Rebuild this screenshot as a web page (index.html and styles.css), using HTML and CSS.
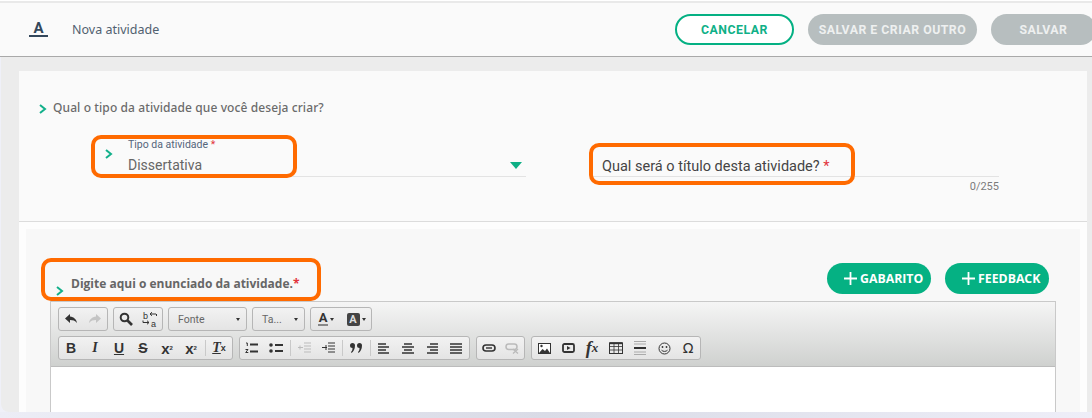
FILE: index.html
```html
<html>
  <head>
    <meta charset="utf-8">
    <link rel="stylesheet" href="styles.css">
  </head>
  <body>
    <div id="topBar">
      <div class="pageTitle">
        <span class="titleIcon">A</span>
        <span class="titleText">Nova atividade</span>
      </div>
      <div class="actions">
        <button class="btn btnOutline">CANCELAR</button>
        <button class="btn btnOff btnLong">SALVAR E CRIAR OUTRO</button>
        <button class="btn btnOff btnShort">SALVAR</button>
      </div>
    </div>

    <div id="content">
      <div class="card">
        <div class="question">
          <svg class="chevron" width="8" height="10" viewBox="0 0 8 10"><path d="M1 1 6 5 1 9" fill="none" stroke="#12b08a" stroke-width="2"/></svg>
          <span>Qual o tipo da atividade que você deseja criar?</span>
        </div>
        <div class="fields">
          <div class="selectField">
            <svg class="selectChevron" width="8" height="10" viewBox="0 0 8 10"><path d="M1 1 6 5 1 9" fill="none" stroke="#12b08a" stroke-width="2"/></svg>
            <div class="selectBody">
              <div class="selectLabel">Tipo da atividade <em>*</em></div>
              <div class="selectRow">
                <span>Dissertativa</span>
                <i class="selectArrow"></i>
              </div>
            </div>
          </div>
          <div class="titleField">
            <div class="titleInput">Qual será o título desta atividade? <em>*</em></div>
            <div class="counter">0/255</div>
          </div>
        </div>
      </div>

      <div class="sheet">
        <div class="lowerCard">
          <div class="statementHead">
            <div class="statementLabel">
              <svg class="statementChevron" width="8" height="10" viewBox="0 0 8 10"><path d="M1 1 6 5 1 9" fill="none" stroke="#12b08a" stroke-width="2"/></svg>
              <span>Digite aqui o enunciado da atividade.<em>*</em></span>
            </div>
            <div class="statementButtons">
              <button class="addBtn"><svg width="13" height="13" viewBox="0 0 13 13"><path d="M6.500 0v13M0 6.500h13" stroke="#fff" stroke-width="1.800"/></svg>GABARITO</button>
              <button class="addBtn"><svg width="13" height="13" viewBox="0 0 13 13"><path d="M6.500 0v13M0 6.500h13" stroke="#fff" stroke-width="1.800"/></svg>FEEDBACK</button>
            </div>
          </div>

          <div class="editor">
            <div class="toolbar">
              <div class="toolRow">
                <div class="group">
                  <span class="tool"><svg width="14" height="12" viewBox="0 0 14 12"><path d="M6 1 1 5.500 6 10V7c3 0 5 .6 7 3-.5-3.500-3-6-7-6.500z" fill="#333"/></svg></span>
                  <span class="tool"><svg width="14" height="12" viewBox="0 0 14 12"><path d="M8 1l5 4.500L8 10V7C5 7 3 7.600 1 10c.5-3.500 3-6 7-6.500z" fill="#c4c4c4"/></svg></span>
                </div>
                <div class="group">
                  <span class="tool"><svg width="14" height="14" viewBox="0 0 14 14"><circle cx="5.500" cy="5.500" r="3.800" fill="none" stroke="#333" stroke-width="2"/><path d="M8.500 8.500 13 13" stroke="#333" stroke-width="2.600"/></svg></span>
                  <span class="tool">
                    <svg width="17" height="17" viewBox="0 0 17 17"><text x="1" y="7.500" class="replaceText">b</text><text x="9" y="15.500" class="replaceText">a</text><path d="M8 3h6M8 3l2-1.800M8 3l2 1.800M14.500 3v2M1 11.500h6M7 11.500l-2-1.800M7 11.500l-2 1.800M1 9.500v2" fill="none" stroke="#333"/></svg>
                  </span>
                </div>
                <div class="group combo comboFont"><span>Fonte</span><i></i></div>
                <div class="group combo comboSize"><span>Ta...</span><i></i></div>
                <div class="group">
                  <span class="tool toolWide"><u class="colorA">A</u><i></i></span>
                  <span class="tool toolWide"><span class="bgA">A</span><i></i></span>
                </div>
              </div>
              <div class="toolRow toolRowWide">
                <div class="group groupSep">
                  <span class="tool fmt">B</span>
                  <span class="tool fmt fmtI">I</span>
                  <span class="tool fmt fmtU">U</span>
                  <span class="tool fmt fmtS">S</span>
                  <span class="tool fmt fmtX">x<sub>2</sub></span>
                  <span class="tool fmt fmtX">x<sup>2</sup></span>
                  <s class="sep"></s>
                  <span class="tool fmt fmtClear"><span>T</span><sub>x</sub></span>
                </div>
                <div class="group groupSep">
                  <span class="tool"><svg width="14" height="12" viewBox="0 0 14 12"><path d="M5 2.500h8M5 9.500h8" stroke="#333" stroke-width="2"/><path d="M1 1h1.300v3M.5 7.500H3L.7 10.500H3.300" fill="none" stroke="#333"/></svg></span>
                  <span class="tool"><svg width="14" height="10" viewBox="0 0 14 10"><circle cx="2" cy="2" r="1.800" fill="#333"/><circle cx="2" cy="8" r="1.800" fill="#333"/><path d="M6 2h8M6 8h8" stroke="#333" stroke-width="2"/></svg></span>
                  <s class="sep"></s>
                  <span class="tool"><svg width="14" height="12" viewBox="0 0 14 12"><path d="M7 1h7M7 4h7M7 7h7M7 10h7" stroke="#bbb"/><path d="M1 5.500h5M3 3.500v4" stroke="#bbb"/></svg></span>
                  <span class="tool"><svg width="14" height="12" viewBox="0 0 14 12"><path d="M7 1h7M7 4h7M7 7h7M7 10h7M1 5.500h5M5 3v5" stroke="#333"/></svg></span>
                  <s class="sep"></s>
                  <span class="tool"><svg width="13" height="10" viewBox="0 0 13 10"><path d="M0 2.500a2.500 2.500 0 1 1 5 0C5 6 3.500 8.500 1.500 10L1 9c1-1 1.500-2 1.500-4A2.500 2.500 0 0 1 0 2.500zM7 2.500a2.500 2.500 0 1 1 5 0c0 3.500-1.500 6-3.500 7.500L8 9c1-1 1.500-2 1.500-4A2.500 2.500 0 0 1 7 2.500z" fill="#333"/></svg></span>
                  <s class="sep"></s>
                  <span class="tool"><svg width="12" height="11" viewBox="0 0 12 11"><path d="M0 1h8M0 4h11M0 7h8M0 10h11" stroke="#333" stroke-width="1.500"/></svg></span>
                  <span class="tool"><svg width="12" height="11" viewBox="0 0 12 11"><path d="M2 1h8M0 4h12M2 7h8M0 10h12" stroke="#333" stroke-width="1.500"/></svg></span>
                  <span class="tool"><svg width="12" height="11" viewBox="0 0 12 11"><path d="M4 1h8M1 4h11M4 7h8M1 10h11" stroke="#333" stroke-width="1.500"/></svg></span>
                  <span class="tool"><svg width="12" height="11" viewBox="0 0 12 11"><path d="M0 1h12M0 4h12M0 7h12M0 10h12" stroke="#333" stroke-width="1.500"/></svg></span>
                </div>
                <div class="group groupLink">
                  <span class="tool"><svg width="14" height="8" viewBox="0 0 14 8"><rect x="1" y="1" width="12" height="6" rx="3" fill="none" stroke="#333" stroke-width="1.600"/><path d="M4 4h6" stroke="#333" stroke-width="1.400"/></svg></span>
                  <span class="tool"><svg width="14" height="11" viewBox="0 0 14 11"><rect x="1" y="1" width="11" height="5.500" rx="2.700" fill="none" stroke="#bbb" stroke-width="1.500"/><path d="M8 6l5 4.500M13 6l-5 4.500" stroke="#bbb" stroke-width="1.400"/></svg></span>
                </div>
                <div class="group">
                  <span class="tool"><svg width="13" height="11" viewBox="0 0 13 11"><rect x=".5" y=".5" width="12" height="10" fill="#fff" stroke="#333"/><path d="M1 10l3.500-4 2.500 2 2-2.500L12 10z" fill="#333"/><circle cx="3.500" cy="3" r="1.200" fill="#333"/></svg></span>
                  <span class="tool"><svg width="13" height="10" viewBox="0 0 13 10"><rect x="1" y="1" width="11" height="8" rx="1.500" fill="none" stroke="#333" stroke-width="1.800"/><path d="M5 3l3.500 2L5 7z" fill="#333"/></svg></span>
                  <span class="tool fx">f<sub>x</sub></span>
                  <span class="tool"><svg width="14" height="12" viewBox="0 0 14 12"><rect x=".5" y="1" width="13" height="10.500" fill="none" stroke="#333"/><path d="M.5 1.200h13" stroke="#333" stroke-width="2"/><path d="M.5 4.500h13M.5 8h13M5 1v10M9.500 1v10" stroke="#333" stroke-width=".8"/></svg></span>
                  <span class="tool"><svg width="12" height="14" viewBox="0 0 12 14"><path d="M0 .5h12M0 3h12M0 11h12M0 13.500h12" stroke="#aaa"/><path d="M0 7h12" stroke="#333" stroke-width="2"/></svg></span>
                  <span class="tool"><svg width="13" height="13" viewBox="0 0 13 13"><circle cx="6.500" cy="6.500" r="5.500" fill="none" stroke="#333"/><circle cx="4.500" cy="5" r=".9" fill="#333"/><circle cx="8.500" cy="5" r=".9" fill="#333"/><path d="M3.500 8.200c1.500 1.600 4.500 1.600 6 0" fill="none" stroke="#333"/></svg></span>
                  <span class="tool omega">Ω</span>
                </div>
              </div>
            </div>
            <div class="editArea"></div>
          </div>
        </div>
      </div>
    </div>
    <div class="bottomEdge"></div>

    <div class="mark markType"></div>
    <div class="mark markTitle"></div>
    <div class="mark markStatement"></div>
  </body>
</html>
```

FILE: styles.css
```css
body {
  position: relative;
  width: 1092px;
  height: 418px;
  margin: 0;
  overflow: hidden;
  background-color: #eff0f8;
  color: #333;
  font-family: 'Roboto', sans-serif;
}

em {
  font-style: normal;
  color: #e2343c;
}

/* ===== Top bar ===== */
#topBar {
  display: flex;
  justify-content: space-between;
  align-items: center;
  box-sizing: border-box;
  height: 56px;
  margin-top: 1px;
  border-top: 2px solid #e9e9e9;
  border-bottom: 1px solid #a9a9a9;
  background-color: #fafafa;
  box-shadow: 0 -1px 0 #fff;
  padding-left: 29px;
}

.pageTitle {
  display: flex;
  align-items: center;
  margin-top: -1px;
}

.titleIcon {
  width: 19px;
  border-bottom: 2px solid #33475b;
  color: #33475b;
  font-size: 15px;
  font-weight: 700;
  line-height: 13px;
  text-align: center;
}

.titleText {
  margin-left: 24px;
  color: #516170;
  font-family: 'Noto Sans', sans-serif;
  font-size: 12.500px;
}

.actions {
  display: flex;
  align-items: center;
  gap: 14px;
  margin-right: -4px;
}

.btn {
  height: 31px;
  box-sizing: border-box;
  border: 0;
  border-radius: 16px;
  padding: 0;
  font-family: 'Roboto', sans-serif;
  font-size: 12.300px;
  font-weight: 700;
  letter-spacing: .5px;
}

.btnOutline {
  width: 119px;
  border: 2px solid #04b083;
  background-color: #fff;
  color: #0fb087;
}

.btnOff {
  background-color: #b7bebf;
  color: #eef0f0;
}

.btnLong { width: 169px; }
.btnShort { width: 105px; }

/* ===== Content ===== */
#content {
  height: 355px;
  margin-left: 1px;
  padding: 14px 5px 0 18px;
  box-sizing: border-box;
  border-bottom-left-radius: 8px;
  background-color: #ececec;
}

.card {
  box-sizing: border-box;
  height: 151px;
  padding-top: 28px;
  border-bottom: 1px solid #dcdcdc;
  background-color: #fafafa;
}

.question {
  display: flex;
  align-items: center;
  padding-left: 20px;
  color: #6b6b6b;
  font-family: 'Noto Sans', sans-serif;
  font-size: 12px;
  font-weight: 500;
  letter-spacing: .1px;
}

.chevron {
  margin-right: 6px;
  margin-top: 2px;
}

.fields {
  display: flex;
  margin-top: 21px;
}

.selectField {
  display: flex;
  width: 421px;
  margin-left: 86px;
}

.selectChevron {
  margin-top: 12px;
  margin-right: 15px;
}

.selectBody {
  flex: 1;
  height: 39px;
  border-bottom: 1px solid #e3e3e3;
}

.selectLabel {
  height: 15px;
  color: #54657a;
  font-size: 10.500px;
  line-height: 15px;
}

.selectRow {
  display: flex;
  justify-content: space-between;
  align-items: center;
  margin-top: 4px;
  color: #666;
  font-size: 14px;
  line-height: 18px;
}

.selectArrow {
  width: 0;
  height: 0;
  margin-right: 4px;
  border-left: 6px solid transparent;
  border-right: 6px solid transparent;
  border-top: 7px solid #0eaf85;
}

.titleField {
  width: 407px;
  margin-left: 66px;
}

.titleInput {
  box-sizing: border-box;
  height: 40px;
  padding: 21px 0 0 10px;
  border-bottom: 1px solid #e3e3e3;
  color: #444;
  font-size: 14.500px;
  line-height: 18px;
}

.counter {
  margin-top: 3px;
  color: #7c7c7c;
  font-size: 11px;
  text-align: right;
}

/* ===== Lower card ===== */
.sheet {
  height: 191px;
  padding: 7px 7px 0;
  box-sizing: border-box;
  background-color: #fdfdfd;
}

.lowerCard {
  box-sizing: border-box;
  height: 184px;
  padding-left: 24px;
  background-color: #f8f8f8;
}

.statementHead {
  display: flex;
  justify-content: space-between;
  height: 72px;
}

.statementLabel {
  position: relative;
  padding: 46px 0 0 21px;
  color: #666;
  font-family: 'Open Sans', sans-serif;
  font-size: 12px;
  font-weight: 700;
}

.statementChevron {
  position: absolute;
  left: 6px;
  top: 57px;
}

.statementButtons {
  display: flex;
  gap: 14px;
  margin-top: 34px;
  padding-right: 31px;
}

.addBtn {
  display: flex;
  align-items: center;
  gap: 3px;
  width: 104px;
  height: 31px;
  border: 0;
  border-radius: 16px;
  padding: 0 0 0 17px;
  background-color: #05b183;
  color: #fff;
  font-family: 'Open Sans', sans-serif;
  font-size: 12.300px;
  font-weight: 700;
}

/* ===== Editor ===== */
.editor {
  width: 1006px;
  box-sizing: border-box;
  height: 111px;
  border: 1px solid #c9c9c9;
  border-bottom: 0;
}

.toolbar {
  box-sizing: border-box;
  height: 65px;
  padding: 5px 7px 0;
  border-bottom: 1px solid #bcbcbc;
  background-image: linear-gradient(#f5f5f5, #cfd1cf);
}

.toolRow {
  display: flex;
  gap: 5px;
  height: 24px;
  margin-bottom: 5px;
}

.toolRowWide { gap: 6px; }

.group {
  display: flex;
  align-items: center;
  box-sizing: border-box;
  height: 24px;
  border: 1px solid #b6b6b6;
  border-radius: 3px;
  background-image: linear-gradient(#f2f2f2, #e4e4e4);
}

.groupSep { padding-right: 1px; }
.groupLink { width: 49px; }

.tool {
  display: flex;
  justify-content: center;
  align-items: center;
  width: 24px;
  height: 22px;
  color: #333;
}

.toolWide { width: 30px; gap: 2px; }

.toolWide i, .combo i {
  width: 0;
  height: 0;
  border-left: 2.500px solid transparent;
  border-right: 2.500px solid transparent;
  border-top: 3px solid #333;
}

.replaceText {
  fill: #333;
  font-family: 'Liberation Sans', sans-serif;
  font-size: 9px;
  font-weight: 400;
}

.sep {
  width: 1px;
  height: 16px;
  margin: 0 1px 0 2px;
  background-color: #c9c9c9;
}

.combo {
  justify-content: space-between;
  padding: 0 6px 0 9px;
  color: #666;
  font-size: 10.500px;
}

.comboFont { width: 79px; }
.comboSize { width: 53px; }

.colorA {
  padding: 0 1px;
  border-bottom: 2px solid #888;
  font-size: 13px;
  font-weight: 700;
  line-height: 12px;
  text-decoration: none;
}

.bgA {
  width: 13px;
  height: 13px;
  border-radius: 2px;
  background-color: #444;
  color: #ddd;
  font-size: 11px;
  font-weight: 700;
  line-height: 13px;
  text-align: center;
}

.fmt {
  font-family: 'Liberation Sans', sans-serif;
  font-size: 14px;
  font-weight: 700;
}

.fmt sub, .fmt sup {
  font-size: 6px;
}

.fmtI {
  font-family: 'Liberation Serif', serif;
  font-style: italic;
}

.fmtU { text-decoration: underline; }
.fmtS { text-decoration: line-through; }
.fmtX { font-size: 15px; }

.fmtClear span {
  font-family: 'Liberation Serif', serif;
  font-style: italic;
  text-decoration: underline;
}

.fmtClear sub { font-size: 9px; }

.fx {
  font-family: 'Liberation Serif', serif;
  font-size: 18px;
  font-style: italic;
  font-weight: 700;
}

.fx sub { font-size: 13px; line-height: 0; }

.omega {
  font-family: 'DejaVu Sans', sans-serif;
  font-size: 14px;
}

.editArea {
  height: 45px;
  background-color: #fff;
}

.bottomEdge {
  position: absolute;
  left: 0;
  right: 0;
  bottom: 0;
  height: 6px;
  background-image: linear-gradient(90deg, #ecedf6, #d9dbe6 50%, #eeeef8);
}

/* orange marks drawn over the form */
.mark {
  position: absolute;
  box-sizing: border-box;
  border: 4px solid #ff6a00;
  border-radius: 10px;
}

.markType { left: 91px; top: 135px; width: 206px; height: 43px; }
.markTitle { left: 589px; top: 143px; width: 266px; height: 42px; }
.markStatement { left: 41px; top: 258px; width: 280px; height: 43px; }
```
